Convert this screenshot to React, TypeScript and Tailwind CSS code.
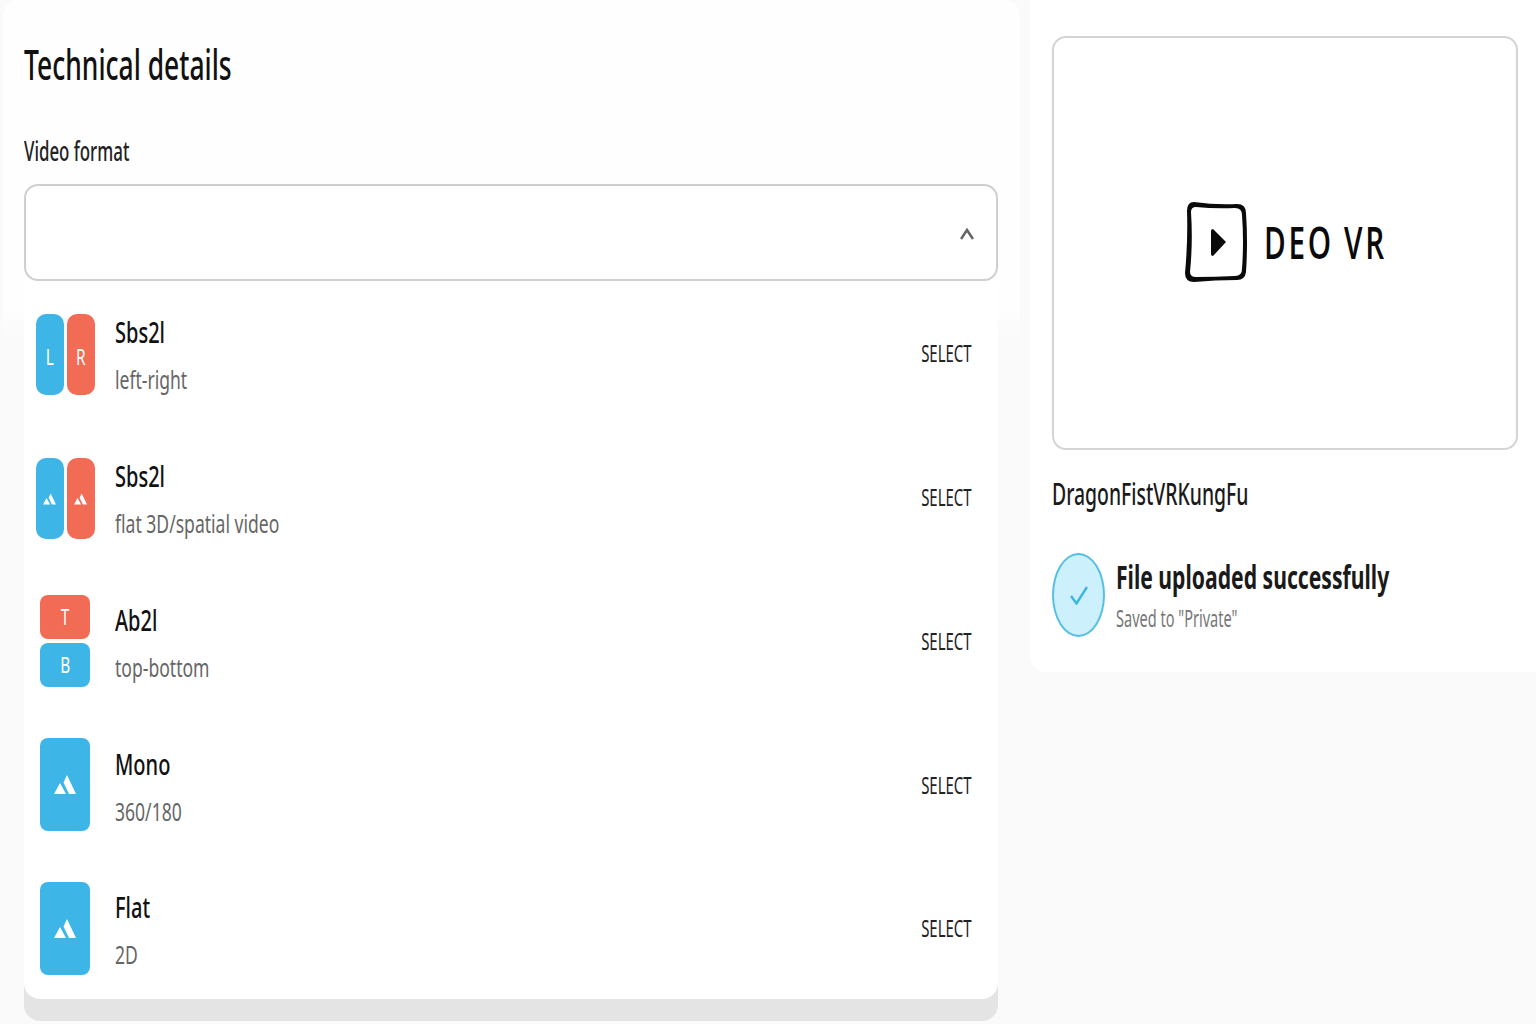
import type { ReactNode } from "react";

const formats = [
  { id: "lr", title: "Sbs2l", sub: "left-right" },
  { id: "sbs", title: "Sbs2l", sub: "flat 3D/spatial video" },
  { id: "tb", title: "Ab2l", sub: "top-bottom" },
  { id: "mono", title: "Mono", sub: "360/180" },
  { id: "flat", title: "Flat", sub: "2D" },
];

// Whole screenshot is squeezed horizontally, so text is too
function Squeezed({ children, className }: { children: ReactNode; className: string }) {
  return <div className={`origin-left whitespace-nowrap ${className}`}>{children}</div>;
}

function Mountain({ className }: { className: string }) {
  return (
    <svg viewBox="0 0 22 19" className={className} fill="white">
      <path d="M13 0 L22 19 H15 L9.5 7.5 Z" />
      <path d="M6 8 L0 19 H12 Z" />
    </svg>
  );
}

function FormatIcon({ id }: { id: string }) {
  if (id === "lr" || id === "sbs") {
    return (
      <div className="flex h-[81px] w-[59px] gap-[3px]">
        <div className="flex flex-1 items-center justify-center rounded-[10px] bg-[#3db5e6]">
          {id === "lr" ? (
            <span className="mt-[3px] scale-x-[0.7] text-[22px] text-white">L</span>
          ) : (
            <Mountain className="h-[12px] w-[13px]" />
          )}
        </div>
        <div className="flex flex-1 items-center justify-center rounded-[10px] bg-[#f26b55]">
          {id === "lr" ? (
            <span className="mt-[3px] scale-x-[0.7] text-[22px] text-white">R</span>
          ) : (
            <Mountain className="h-[12px] w-[13px]" />
          )}
        </div>
      </div>
    );
  }
  if (id === "tb") {
    return (
      <div className="-mt-[3px] flex h-[92px] w-[50px] flex-col gap-[4px]">
        <div className="flex flex-1 items-center justify-center rounded-lg bg-[#f26b55]">
          <span className="scale-x-[0.7] text-[22px] text-white">T</span>
        </div>
        <div className="flex flex-1 items-center justify-center rounded-lg bg-[#3db5e6]">
          <span className="scale-x-[0.7] text-[22px] text-white">B</span>
        </div>
      </div>
    );
  }
  return (
    <div className="-mt-[3px] flex h-[93px] w-[50px] items-center justify-center rounded-lg bg-[#3db5e6]">
      <Mountain className="h-[19px] w-[22px]" />
    </div>
  );
}

function DeoLogo() {
  return (
    <div className="flex items-center gap-[17px]">
      <svg viewBox="0 0 62 80" className="h-[80px] w-[62px]">
        <path
          fillRule="evenodd"
          d="M9 0 Q30 3 52 2 Q61 2 61 11 Q63 40 61 70 Q60 78 52 78 Q30 78 9 80 Q0 80 0 71 Q3 40 2 9 Q2 0 9 0 Z M11 5 Q6 5 6 10 Q8 40 5 70 Q5 75 11 75 Q30 75 50 74 Q57 74 57 67 Q59 40 57 13 Q57 6 50 6 Q30 7 11 5 Z"
          fill="#0a0a0a"
        />
        <path d="M28 27 L41 40 L28 54 Q26 54 26 52 V29 Q26 27 28 27 Z" fill="#0a0a0a" />
      </svg>
      <div className="mb-[3px] w-[121px] origin-left scale-x-[0.645] whitespace-nowrap font-['Open_Sans',sans-serif] text-[46px] leading-none font-semibold tracking-[0.09em] text-[#0a0a0a]">
        DEO VR
      </div>
    </div>
  );
}

export default function App() {
  return (
    <div className="flex h-screen gap-[10px] overflow-hidden bg-[#fafafa] font-['Noto_Sans',sans-serif]">
      <div className="ml-[3px] h-full w-[1017px] shrink-0 rounded-2xl bg-linear-to-b from-[#fefefe] from-[30%] to-[#fafafa] to-[33%] pt-[35px] pl-[21px]">
        <Squeezed className="scale-x-[0.63] text-[42px] leading-[58px] font-medium text-[#111]">Technical details</Squeezed>
        <Squeezed className="mt-[39px] scale-x-[0.625] text-[27px] leading-[38px] font-medium text-[#222]">Video format</Squeezed>
        <div className="mt-[14px] flex h-[97px] w-[974px] items-center justify-end rounded-[14px] border-2 border-[#cfcfcf] bg-white pt-[2px] pr-[22px]">
          <svg viewBox="0 0 14 12" className="h-[12px] w-[14px]" fill="none" stroke="#666" strokeWidth="2.6">
            <path d="M1 11 L7 2 L13 11" />
          </svg>
        </div>
        <div className="h-[718px] w-[974px] rounded-b-2xl bg-white pt-[2px] shadow-[0_22px_0_0_#e4e4e4]">
          {formats.map((f) => (
            <div key={f.id + f.sub} className="flex h-[143.75px] items-center pr-[26px] pl-[6px]">
              <div className="flex w-[70px] justify-center">
                <FormatIcon id={f.id} />
              </div>
              <div className="ml-[15px] flex flex-col gap-[11px] pt-[2px]">
                <Squeezed className="scale-x-[0.69] text-[29px] leading-[36px] font-medium text-[#111]">{f.title}</Squeezed>
                <Squeezed className="scale-x-[0.675] text-[26px] leading-[36px] text-[#666]">{f.sub}</Squeezed>
              </div>
              <div className="mb-[3px] ml-auto origin-right scale-x-[0.65] text-[23px] leading-8 text-[#222]">SELECT</div>
            </div>
          ))}
        </div>
      </div>
      <div className="h-[672px] w-[506px] shrink-0 rounded-bl-2xl bg-white pt-[36px] pr-[18px] pl-[22px]">
        <div className="flex h-[414px] items-center justify-center rounded-[14px] border-2 border-[#d4d4d4] pb-[2px]">
          <DeoLogo />
        </div>
        <Squeezed className="mt-[22px] scale-x-[0.625] text-[31px] leading-[42px] font-medium text-[#1a1a1a]">DragonFistVRKungFu</Squeezed>
        <div className="mt-[39px] flex items-center gap-[11px]">
          <div className="flex h-[84px] w-[53px] shrink-0 items-center justify-center rounded-[50%] border-2 border-[#56bfe6] bg-[#cdf0fd]">
            <svg viewBox="0 0 18 19" className="h-[19px] w-[18px]" fill="none" stroke="#3bb5e3" strokeWidth="2.4">
              <path d="M1 10 L6.5 17.5 L17 1" />
            </svg>
          </div>
          <div className="pb-[3px]">
            <Squeezed className="scale-x-[0.641] text-[33px] leading-[46px] font-bold text-[#1a1a1a]">File uploaded successfully</Squeezed>
            <Squeezed className="mt-[3px] scale-x-[0.632] text-[23px] leading-[30px] text-[#777]">Saved to "Private"</Squeezed>
          </div>
        </div>
      </div>
    </div>
  );
}
